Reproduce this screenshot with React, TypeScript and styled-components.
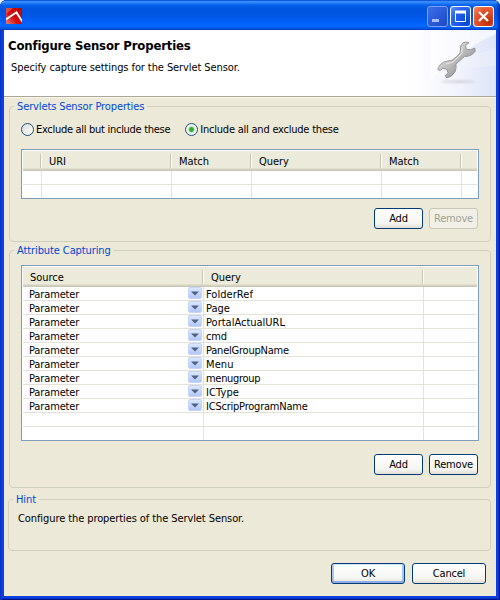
import React from "react";
import styled, { createGlobalStyle, css } from "styled-components";

const Global = createGlobalStyle`
  * { box-sizing: border-box; }
  html, body { margin: 0; background: #e4edf8; }
  body { font: 11px/14px "DejaVu Sans Condensed", "DejaVu Sans", Tahoma, sans-serif; font-stretch: condensed; color: #000; }
`;

const Window = styled.div`
  width: 500px; height: 600px; padding: 0 4px 4px;
  display: flex; flex-direction: column;
  border-radius: 7px 7px 0 0; overflow: hidden;
  background: #0a3fe0;
  box-shadow: inset 1px 0 #0831c8, inset 2px 0 #0a40d8, inset -1px 0 #00138c, inset -2px 0 #0831c8, inset 0 -1px #00138c, inset 0 -2px #0531c0;
`;
const TitleBar = styled.div`
  height: 30px; flex: none; margin: 0 -4px; padding: 6px 6px 0;
  display: flex; align-items: flex-start; gap: 2px;
  background: linear-gradient(#0058e6 0, #3c92ff 5%, #2a84fa 9%, #0560ea 18%, #0054df 30%, #0055e3 50%, #005df5 68%, #0266fe 82%, #0166fb 88%, #0055e0 96%, #0042c8 100%);
  box-shadow: inset -2px 0 2px #0030a8;
`;
const LogoSlot = styled.div`flex: 1; padding-top: 2px; svg { display: block; }`;
const Caption = styled.div<{ $close?: boolean; $dim?: boolean }>`
  width: 21px; height: 21px; border-radius: 3px;
  border: 1px solid ${p => (p.$dim ? "#7f9ff0" : "#fff")};
  background: ${p => p.$close
    ? "radial-gradient(circle at 75% 80%, #c03008, #e4552d 60%, #f09070)"
    : p.$dim ? "linear-gradient(135deg, #3d6de8, #1a49c4)" : "radial-gradient(circle at 80% 80%, #0546d8, #2864f0 65%, #6a94fa)"};
  svg { display: block; }
`;
const Header = styled.div`
  height: 67px; flex: none; padding: 8px 0 0 4px; display: flex;
  background: linear-gradient(90deg, #fff 82%, #f2f4fd 92%, #dde4f7 100%);
  border-bottom: 1px solid #aaa797;
`;
const Heading = styled.div`flex: 1;`;
const Title = styled.div`font-size: 13px; line-height: 15px; font-weight: bold; letter-spacing: -0.16px; white-space: nowrap;`;
const Line = styled.div`margin: 8px 0 0 3px; letter-spacing: -0.09px; white-space: nowrap;`;
const Wrench = styled.svg`width: 66px; height: 66px; margin-top: -8px; flex: none;`;

const Body = styled.div`
  flex: 1; padding: 1px 5px 0; background: #ece9d8; border-top: 1px solid #f8f6ec;
  display: flex; flex-direction: column;
`;
const Group = styled.fieldset<{ $h: number; $gap?: number; $out?: number }>`
  flex: none; height: ${p => p.$h}px; min-width: 0; padding: 0 11px;
  margin: 0 0 ${p => p.$gap ?? 0}px -${p => p.$out ?? 0}px;
  border: 1px solid #d0d0bf; border-radius: 4px;
`;
const Legend = styled.legend<{ $s?: number }>`
  height: 14px; line-height: 16px; margin-left: -7px; padding: 0 3px; color: #0046d5; letter-spacing: ${p => p.$s ?? -0.1}px;
`;
const Radios = styled.div`display: flex; height: 36px; padding-top: 9px; gap: 15px;`;
const RadioLabel = styled.div<{ $s?: number }>`
  display: flex; align-items: center; height: 15px; gap: 2px; letter-spacing: ${p => p.$s ?? -0.22}px; white-space: nowrap;
`;
const Dot = styled.span<{ $on?: boolean }>`
  width: 13px; height: 13px; border-radius: 50%; border: 1px solid #1c5180;
  background: ${p => (p.$on ? "radial-gradient(circle, #21a121 0, #3bb83b 2px, #dfe9dc 3.2px, #f6f6f2 5px)" : "linear-gradient(135deg, #dcdcd7, #fff)")};
`;

const tracks = css<{ $cols: string }>`display: grid; grid-template-columns: ${p => p.$cols};`;
const Table = styled.div<{ $h: number; $top?: number }>`
  height: ${p => p.$h}px; margin-top: ${p => p.$top ?? 0}px; border: 1px solid #7f9db9; background: #fff; padding: 1px;
  overflow: hidden; display: flex; flex-direction: column;
`;
const HeadRow = styled.div<{ $cols: string }>`
  ${tracks} height: 20px; flex: none; background: #ebeadb;
  box-shadow: inset 0 -1px #cbc7b8, inset 0 -2px #d6d2c2, inset 0 -3px #e2decd;
`;
const HeadCell = styled.div<{ $last?: boolean }>`
  height: 14px; margin: 3px 1px 0 0; padding-left: 7px; line-height: 15px; letter-spacing: -0.05px;
  border-right: ${p => (p.$last ? "0" : "1px solid #c7c5b2")};
  box-shadow: ${p => (p.$last ? "none" : "1px 0 #fff")};
`;
const Row = styled.div<{ $cols: string }>`${tracks} height: 14px; flex: none; border-bottom: 1px solid #e5e3d8;`;
const Cell = styled.div<{ $s?: number }>`
  display: flex; justify-content: space-between; height: 13px; line-height: 15px; padding-left: 2px;
  border-right: 1px solid #e5e3d8; white-space: nowrap; letter-spacing: ${p => p.$s ?? -0.22}px;
  &:first-child { padding-left: 6px; }
  &:last-child { border-right: 0; }
`;
const Drop = styled.span`
  width: 14px; height: 12px; margin-right: 1px; border-radius: 2px; border: 1px solid #c3d3fb;
  background: linear-gradient(#dbe6ff, #b4c8f6); display: flex; align-items: center; justify-content: center;
`;
const Buttons = styled.div<{ $top: number; $gap?: number; $right?: number }>`
  display: flex; justify-content: flex-end; gap: ${p => p.$gap ?? 6}px; padding: ${p => p.$top}px ${p => p.$right ?? 1}px 0 0;
`;
const Button = styled.button<{ $w?: number; $primary?: boolean }>`
  width: ${p => p.$w ?? 49}px; height: 21px; padding: 0; border: 1px solid #003c74; border-radius: 3px;
  font: inherit; letter-spacing: -0.2px; line-height: 19px; color: #000;
  background: linear-gradient(#fff, #f5f5f1 75%, #e3dfd3);
  box-shadow: ${p => (p.$primary ? "inset 0 1px #cee7ff, inset 0 -2px #8fabe8, inset 2px 0 #a9c5f5, inset -2px 0 #a9c5f5" : "none")};
  &:disabled { color: #a1a192; border-color: #c9c7ba; background: #f2f0e6; }
`;
const Hint = styled.div`margin: 6px 0 0 -2px; letter-spacing: -0.09px; white-space: nowrap;`;

const COLS_A = "19px 130px 80px 130px 80px 1fr";
const COLS_B = "181px 220px 1fr";
const attrs: { name: string; spacing?: number }[] = [
  { name: "FolderRef", spacing: 0.05 },
  { name: "Page", spacing: 0 },
  { name: "PortalActualURL", spacing: 0 },
  { name: "cmd" },
  { name: "PanelGroupName" },
  { name: "Menu", spacing: 0.1 },
  { name: "menugroup", spacing: -0.3 },
  { name: "ICType", spacing: 0.1 },
  { name: "ICScripProgramName" },
];

const Logo = () => (
  <svg width="16" height="16" viewBox="0 0 16 16">
    <defs>
      <linearGradient id="red" x1="0" y1="1" x2="1" y2="0">
        <stop offset="0" stopColor="#e88880" /><stop offset=".4" stopColor="#d3100f" /><stop offset="1" stopColor="#b90000" />
      </linearGradient>
    </defs>
    <rect width="16" height="16" rx="1" fill="url(#red)" />
    <path d="M0 0H7L0 6Z" fill="#ef9a94" opacity=".45" />
    <path d="M0 10.3 10.8 3 16 11.5V14.5L10 5.8 0 12.5Z" fill="#fff" />
  </svg>
);

export default function App() {
  return (
    <>
      <Global />
      <Window>
        <TitleBar>
          <LogoSlot><Logo /></LogoSlot>
          <Caption $dim><svg width="19" height="19"><path d="M4 13.5h7" stroke="#a9bdf2" strokeWidth="3" /></svg></Caption>
          <Caption><svg width="19" height="19"><path d="M4.5 4v10.5h10V4" fill="none" stroke="#fff" /><path d="M4 5h11" stroke="#fff" strokeWidth="3" /></svg></Caption>
          <Caption $close><svg width="19" height="19"><path d="m5 5 9 9m0-9-9 9" stroke="#fff" strokeWidth="2.2" /></svg></Caption>
        </TitleBar>
        <Header>
          <Heading>
            <Title>Configure Sensor Properties</Title>
            <Line>Specify capture settings for the Servlet Sensor.</Line>
          </Heading>
          <Wrench viewBox="0 0 198 198">
            <defs>
              <linearGradient id="steel" x1="0" y1="0" x2="1" y2="1">
                <stop offset=".35" stopColor="#cfcfcf" /><stop offset=".65" stopColor="#a4a4a6" />
              </linearGradient>
              <linearGradient id="beam" x1="0" y1="0" x2="1" y2="0">
                <stop offset="0" stopColor="#fff" stopOpacity=".2" /><stop offset="1" stopColor="#fff" stopOpacity=".6" />
              </linearGradient>
              <filter id="soft" x="-20%" y="-100%" width="140%" height="300%"><feGaussianBlur stdDeviation="3" /></filter>
            </defs>
            <path d="M0 0H198V12Q130 40 80 85L0 150Z" fill="#fff" opacity=".6" />
            <path d="M198 55Q120 75 60 110L60 125Q130 110 198 108Z" fill="url(#beam)" opacity=".4" />
            <ellipse cx="85" cy="155" rx="52" ry="4" fill="#b9b9c0" opacity=".55" filter="url(#soft)" />
            <path d="M99 38Q88 48 91 62Q92 68 84 76L66 91Q56 92 44 95Q30 99 23 118L30 122 38 115 50 118 54 128 46 138 50 144Q66 142 76 124Q80 112 78 102L104 79Q124 81 136 63L134 54 122 59 109 58 107 47 117 38Q108 34 99 38Z" fill="url(#steel)" stroke="#7b7b7e" strokeWidth="2" />
            <path d="M48 102 69 96 96 70V52" fill="none" stroke="#ececec" strokeWidth="3" />
          </Wrench>
        </Header>
        <Body>
          <Group $h={143} $gap={1}>
            <Legend $s={-0.12}>Servlets Sensor Properties</Legend>
            <Radios>
              <RadioLabel $s={-0.29}><Dot />Exclude all but include these</RadioLabel>
              <RadioLabel><Dot $on />Include all and exclude these</RadioLabel>
            </Radios>
            <Table $h={50}>
              <HeadRow $cols={COLS_A}>
                <HeadCell /><HeadCell>URI</HeadCell><HeadCell>Match</HeadCell><HeadCell>Query</HeadCell><HeadCell>Match</HeadCell><HeadCell $last />
              </HeadRow>
              {[0, 1].map(i => (
                <Row key={i} $cols={COLS_A}><Cell /><Cell /><Cell /><Cell /><Cell /><Cell /></Row>
              ))}
            </Table>
            <Buttons $top={9}><Button>Add</Button><Button disabled>Remove</Button></Buttons>
          </Group>
          <Group $h={245} $gap={4}>
            <Legend>Attribute Capturing</Legend>
            <Table $h={176} $top={8}>
              <HeadRow $cols={COLS_B}><HeadCell>Source</HeadCell><HeadCell>Query</HeadCell><HeadCell $last /></HeadRow>
              {attrs.map(a => (
                <Row key={a.name} $cols={COLS_B}>
                  <Cell $s={-0.13}>Parameter<Drop><svg width="8" height="5"><path d="M0 .5h8L4 4.5Z" fill="#4d6185" /></svg></Drop></Cell>
                  <Cell $s={a.spacing}>{a.name}</Cell><Cell />
                </Row>
              ))}
              {[0, 1].map(i => <Row key={i} $cols={COLS_B}><Cell /><Cell /><Cell /></Row>)}
            </Table>
            <Buttons $top={13}><Button>Add</Button><Button>Remove</Button></Buttons>
          </Group>
          <Group $h={59} $out={1}>
            <Legend>Hint</Legend>
            <Hint>Configure the properties of the Servlet Sensor.</Hint>
          </Group>
          <Buttons $top={12} $gap={7} $right={5}><Button $w={74} $primary>OK</Button><Button $w={74}>Cancel</Button></Buttons>
        </Body>
      </Window>
    </>
  );
}
